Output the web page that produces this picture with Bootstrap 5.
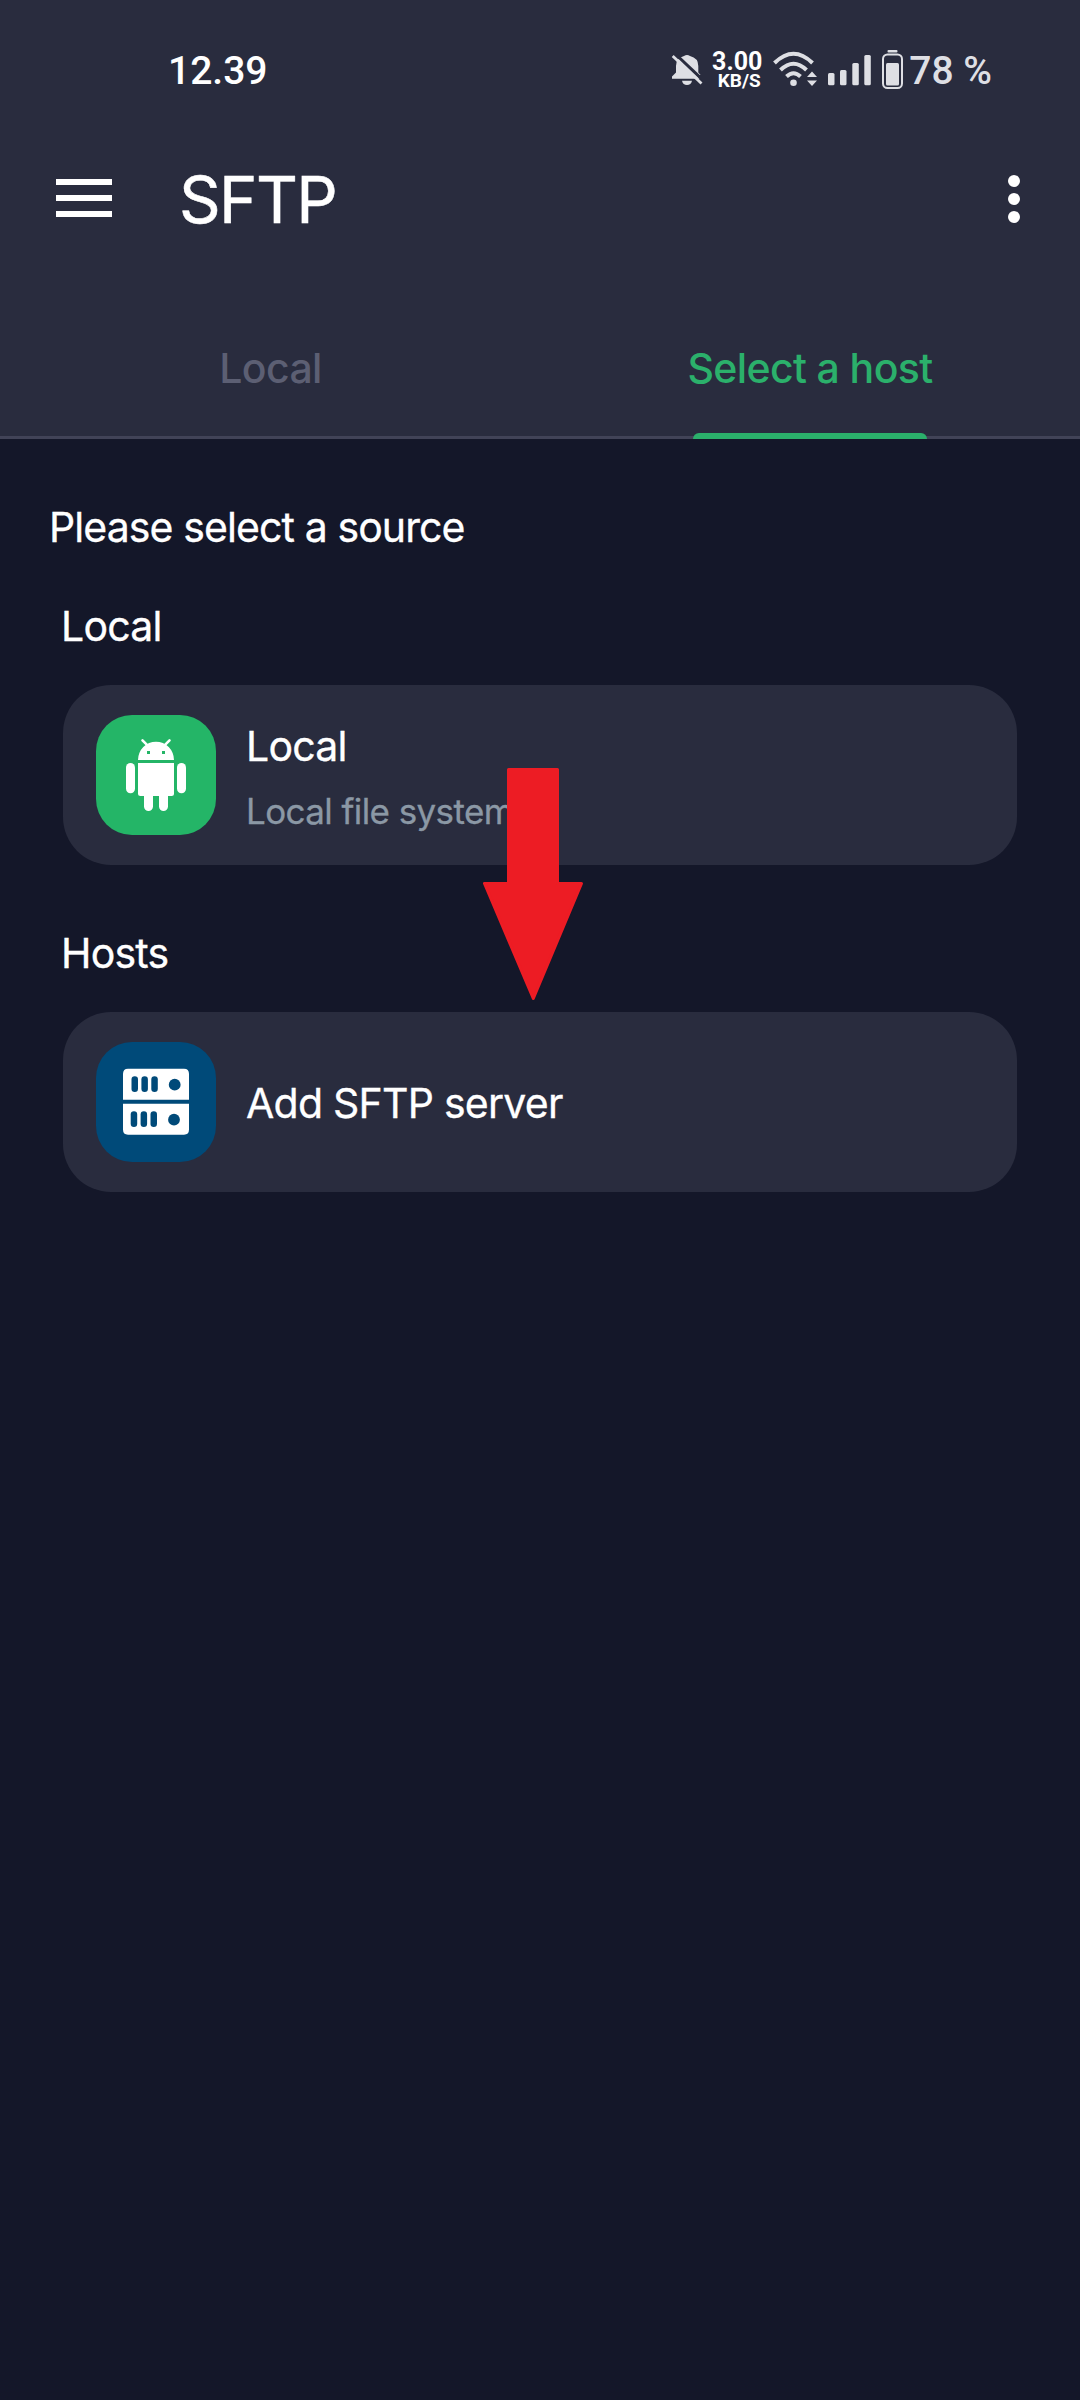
<!DOCTYPE html>
<html lang="en">
<head>
<meta charset="utf-8">
<meta name="viewport" content="width=device-width, initial-scale=1">
<title>SFTP</title>
<link href="https://cdn.jsdelivr.net/npm/bootstrap@5.3.0/dist/css/bootstrap.min.css" rel="stylesheet">
<style>
body{background:#141729;color:#fff;font-family:Inter,"Liberation Sans",sans-serif;font-size:41px;font-weight:400;min-height:2400px;overflow-x:hidden}
svg{display:block;flex:none}
.app-head{background:#292c3e;height:439px;border-bottom:3px solid #414357}
.status{height:141px;padding:0 88px 0 168px;font-family:Roboto,sans-serif;font-size:39px;font-weight:500;line-height:42px}
.status-set{color:#dedfe4}
.speed{width:52px;margin:0 8px 4px 7px;color:#fff;font-weight:700;line-height:1}
.speed-n{font-size:25px;height:21px;line-height:24px}
.speed-u{font-size:19px;height:17px;line-height:19px;padding-left:4px}
.app-bar{height:118px;padding:0 50px 0 56px}
.menu-icon{margin-bottom:4px}
.more-icon{margin-bottom:2px}
.app-title{font-size:65px;line-height:80px;margin-left:67px;font-weight:400;letter-spacing:-1.6px;-webkit-text-stroke:.5px #fff}
.app-tabs{margin-top:38px;height:142px;font-weight:500;letter-spacing:-.62px}
.app-tab{width:540px;line-height:60px;color:#5c5f73;padding-left:1px}
.app-tab.active{color:#2bb06b;padding-left:0}
.tab-line{left:153px;bottom:0;width:234px;height:6px;border-radius:6px 6px 0 0;background:#2bb06b}
.main-area{padding-top:58px;-webkit-text-stroke:.3px currentColor}
.line{line-height:60px;height:60px;white-space:nowrap}
.prompt{margin:0 0 39px 49px;letter-spacing:-.9px}
.sect{margin-left:61px;letter-spacing:-.8px}
.tile{height:180px;width:954px;margin:29px 0 58px 63px;border-radius:48px;background:#292c3e;padding:30px 33px}
.tile-icon{width:120px;height:120px;border-radius:36px;flex:none}
.bg-droid{background:#24b567}
.bg-srv{background:#004a79}
.tile-text{margin-left:30px;white-space:nowrap;letter-spacing:-.75px}
.tile-name{line-height:50px;margin-top:6px}
.tile-solo{line-height:60px;padding-top:1px}
.tile-sub{line-height:50px;margin-top:15px;font-size:35px;color:#8b98a5;letter-spacing:-.6px}
.pointer{left:482px;top:767px}
</style>
</head>
<body class="position-relative">
<header class="app-head">
  <div class="status d-flex align-items-center justify-content-between">
    <span>12.39</span>
    <div class="status-set d-flex align-items-center">
      <svg width="34" height="42" viewBox="670 49 34 42" fill="currentColor"><path d="M672 77.700V75.500L676 71.500V65Q676 57 684 55Q687 52.800 690 55Q698.300 57 698.300 65V71.500L701.500 75V77.700ZM682 79.700H692Q691 84 687 84T682 79.700Z"/><path d="M676.500 54L706.500 82.500" stroke="#292c3e" stroke-width="3"/><path d="M672.700 55L701.500 82.500" stroke="currentColor" stroke-width="2.800"/><path d="M698.500 76.500L704 81.500V74H697Z" fill="#292c3e"/></svg>
      <div class="speed d-flex flex-column align-items-center"><div class="speed-n">3.00</div><div class="speed-u">KB/S</div></div>
      <svg width="46" height="42" viewBox="771 49 46 42" fill="none" stroke="currentColor" stroke-width="4"><path d="M774.500 62Q793.500 43.500 812.500 62M780.500 69Q793.500 56.500 806.500 69M786.500 75.500Q793.500 69 800.500 75.500"/><circle cx="793.500" cy="81.700" r="3.300" fill="currentColor" stroke="none"/><path d="M807 76L812 70.500L817 76ZM807 79.500L812 85L817 79.500Z" fill="currentColor" stroke="none"/></svg>
      <svg class="ms-2 me-2" width="48" height="42" viewBox="825 49 48 42" fill="currentColor"><rect x="828" y="72" width="6.500" height="12.300" rx="1.500"/><rect x="840" y="69" width="6.500" height="15.300" rx="1.500"/><rect x="852.300" y="62" width="6.500" height="22.300" rx="1.500"/><rect x="864.300" y="54" width="6.500" height="30.300" rx="1.500"/></svg>
      <svg width="24" height="42" viewBox="881 49 24 42"><rect x="887.500" y="49" width="10" height="2.500" rx="1" fill="currentColor"/><rect x="883" y="53.500" width="19" height="33.500" rx="4.500" fill="none" stroke="currentColor" stroke-width="2"/><rect x="886" y="62" width="13" height="22.500" rx="1.500" fill="currentColor"/></svg>
      <span class="ms-1">78 %</span>
    </div>
  </div>
  <div class="app-bar d-flex align-items-center">
    <svg class="menu-icon" width="56" height="38" viewBox="0 0 56 38" fill="#fff"><path d="M0 0H56V6H0ZM0 16H56V22H0ZM0 32H56V38H0Z"/></svg>
    <h1 class="app-title mb-0">SFTP</h1>
    <svg class="more-icon ms-auto" width="32" height="48" viewBox="0 0 32 48" fill="#fff"><circle cx="16" cy="6" r="6"/><circle cx="16" cy="24" r="6"/><circle cx="16" cy="42" r="6"/></svg>
  </div>
  <nav class="app-tabs d-flex align-items-center text-center">
    <div class="app-tab">Local</div>
    <div class="app-tab active position-relative h-100 d-flex align-items-center justify-content-center">Select a host<span class="tab-line position-absolute"></span></div>
  </nav>
</header>
<main class="main-area">
  <div class="line prompt">Please select a source</div>
  <div class="line sect">Local</div>
  <div class="tile d-flex">
    <div class="tile-icon bg-droid">
      <svg width="120" height="120" viewBox="0 0 120 120" fill="#fff"><path d="M42 45A18 18.300 0 0 1 78 45ZM42 48H78V78.500Q78 81 75.500 81H72V91.500A4.500 4.500 0 0 1 63 91.500V81H57V91.500A4.500 4.500 0 0 1 48 91.500V81H44.500Q42 81 42 78.500Z"/><rect x="30" y="48" width="9" height="30.300" rx="4.500"/><rect x="81" y="48" width="9" height="30.300" rx="4.500"/><path d="M46.500 25.300L51 29.800M73.500 25.300L69 29.800" stroke="#fff" stroke-width="2.600" stroke-linecap="round"/><path d="M51 36H54V39H51ZM66 36H69V39H66Z" fill="#24b567"/></svg>
    </div>
    <div class="tile-text"><div class="tile-name">Local</div><div class="tile-sub">Local file system</div></div>
  </div>
  <div class="line sect">Hosts</div>
  <div class="tile d-flex align-items-center">
    <div class="tile-icon bg-srv">
      <svg width="120" height="120" viewBox="0 0 120 120" fill="#fff"><path d="M27 57.700V32Q27 26.700 32 26.700H88Q93 26.700 93 32V57.700ZM27 61.700H93V87.500Q93 92.700 88 92.700H32Q27 92.700 27 87.500Z"/><g fill="#004a79"><rect x="35.500" y="34.300" width="6.500" height="15.700" rx="3.200"/><rect x="45.400" y="34.300" width="6.500" height="15.700" rx="3.200"/><rect x="55.300" y="34.300" width="6.500" height="15.700" rx="3.200"/><circle cx="78.700" cy="42.700" r="5.900"/><rect x="34.700" y="69.200" width="6.500" height="15.700" rx="3.200"/><rect x="44.600" y="69.200" width="6.500" height="15.700" rx="3.200"/><rect x="54.500" y="69.200" width="6.500" height="15.700" rx="3.200"/><circle cx="78" cy="77.700" r="5.900"/></g></svg>
    </div>
    <div class="tile-text tile-solo">Add SFTP server</div>
  </div>
</main>
<svg class="pointer position-absolute" width="102" height="234" viewBox="482 767 102 234"><path d="M508.500 769.500H557.500V883.500H581.500L533.300 998.500L484.500 883.500H508.500Z" fill="#ed1c24" stroke="#ed1c24" stroke-width="3" stroke-linejoin="round"/></svg>
<script src="https://cdn.jsdelivr.net/npm/bootstrap@5.3.0/dist/js/bootstrap.bundle.min.js"></script>
</body>
</html>
